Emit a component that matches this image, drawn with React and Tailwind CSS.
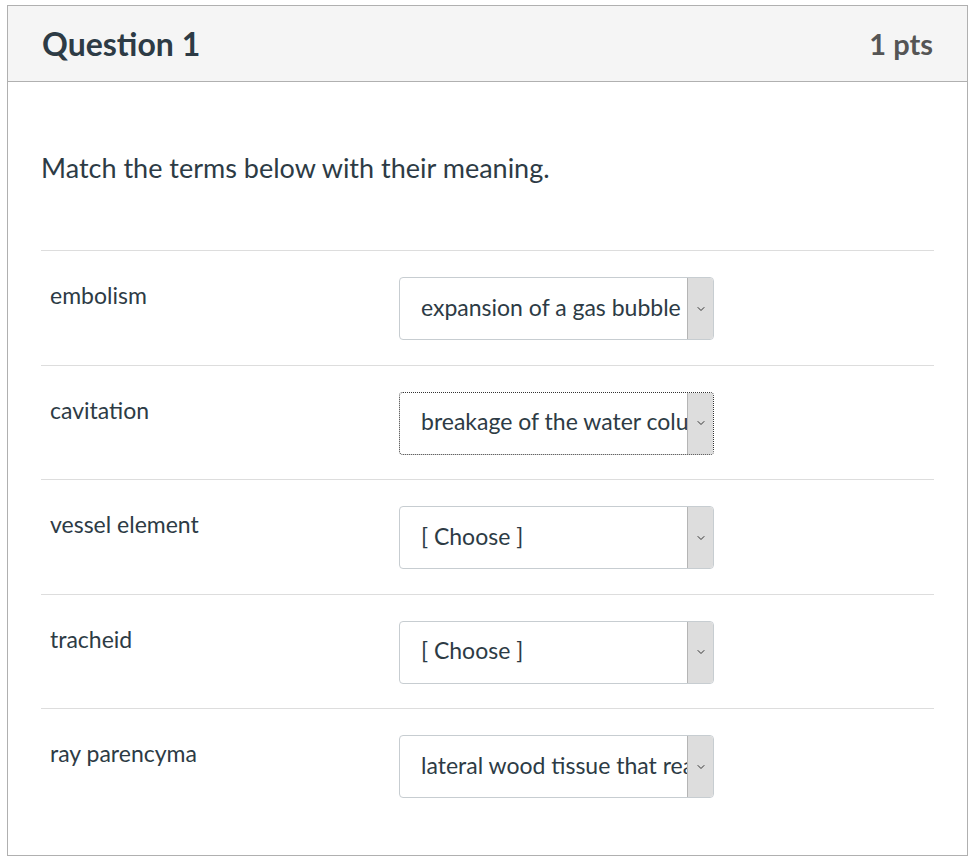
import { ChevronDown } from 'lucide-react';

const ROWS = [
  { term: 'embolism', answer: 'expansion of a gas bubble' },
  { term: 'cavitation', answer: 'breakage of the water column', focused: true },
  { term: 'vessel element', answer: '[ Choose ]' },
  { term: 'tracheid', answer: '[ Choose ]' },
  { term: 'ray parencyma', answer: 'lateral wood tissue that reaches the center' },
];

const FakeSelect = ({ value, focused }) => (
  <div
    className={`flex w-[315px] h-[63px] rounded-[4px] overflow-hidden bg-white ${
      focused ? 'border border-dotted border-[#333]' : 'border border-[#c7cdd1]'
    }`}
  >
    <div className="flex-1 flex items-center pl-[21px] pb-[3px] overflow-hidden whitespace-nowrap text-[23px] text-[#2d3b45]">
      {value}
    </div>
    <div className="w-[26px] shrink-0 flex items-center justify-center bg-[#dddddd] border-l border-[#b5b5b5]">
      <ChevronDown size={12} strokeWidth={2} className="text-[#333]" />
    </div>
  </div>
);

const App = () => {
  return (
    <div className="w-[975px] h-[861px] bg-white pt-[5px] pl-[7px]" style={{ fontFamily: 'Lato, "Open Sans", sans-serif' }}>
      <div className="w-[961px] h-[851px] border border-[#b0b0b0] flex flex-col">
        <div className="h-[76px] shrink-0 bg-[#f5f5f5] border-b border-[#b0b0b0] flex items-center justify-between px-[34px]">
          <h2 className="text-[32px] font-bold text-[#2d3b45]">Question 1</h2>
          <span className="text-[29px] font-bold text-[#555]">1 pts</span>
        </div>

        <div className="px-[33px]">
          <p className="text-[27px] leading-[40px] text-[#2d3b45] pt-[66px] pb-[62px]">Match the terms below with their meaning.</p>

          {ROWS.map((r) => (
            <div key={r.term} className="flex border-t border-[#dddddd] h-[114.5px]">
              <div className="w-[358px] pl-[9px] pt-[27px] text-[23px] text-[#2d3b45]">{r.term}</div>
              <div className="pt-[26px]">
                <FakeSelect value={r.answer} focused={r.focused} />
              </div>
            </div>
          ))}
        </div>
      </div>
    </div>
  );
};

export default App;
